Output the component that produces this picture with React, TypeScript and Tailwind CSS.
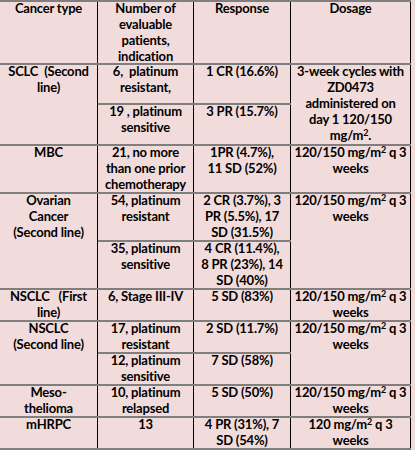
import React from "react";

const F = { fontFamily: "Lato, 'Open Sans', sans-serif" };

function Sup() {
  return <sup className="text-[9px] top-[-0.45em]">2</sup>;
}

const dose = (
  <>
    120/150 mg/m<Sup /> q 3<br />weeks
  </>
);

function Cell({ children, w, className = "" }: { children: React.ReactNode; w: string; className?: string }) {
  return (
    <div className={`${w} shrink-0 border-r border-black text-center ${className}`}>
      <div className="-mt-[2px]">{children}</div>
    </div>
  );
}

type Sub = { h: string; n: React.ReactNode; r: React.ReactNode; sep?: boolean };

function Group({ h, type, subs, d }: { h: string; type: React.ReactNode; subs: Sub[]; d: React.ReactNode }) {
  return (
    <div className={`flex ${h} border-b-2 border-[#7f7f7f]`}>
      <Cell w="w-[98px]">{type}</Cell>
      <div className="flex w-[193px] shrink-0 flex-col">
        {subs.map((s, i) => (
          <div key={i} className={`flex ${s.h} ${s.sep ? "border-b-2 border-[#7f7f7f]" : ""}`}>
            <Cell w="w-[96px]">{s.n}</Cell>
            <Cell w="w-[97px]">{s.r}</Cell>
          </div>
        ))}
      </div>
      <Cell w="w-[120px]">{d}</Cell>
    </div>
  );
}

export default function App() {
  return (
    <div
      className="w-[415px] h-[450px] overflow-hidden bg-[#f2dcdb] text-black font-bold text-[13px] leading-[16px] tracking-[-0.2px]"
      style={F}
    >
      <div className="w-[411px] border-t-2 border-[#7f7f7f]">
        <div className="flex h-[63px] border-b-2 border-[#7f7f7f]">
          <Cell w="w-[98px]">Cancer type</Cell>
          <Cell w="w-[96px]">Number of<br />evaluable<br />patients,<br />indication</Cell>
          <Cell w="w-[97px]">Response</Cell>
          <Cell w="w-[120px]">Dosage</Cell>
        </div>
        <Group
          h="h-[81px]"
          type={<>SCLC&nbsp; (Second<br />line)</>}
          subs={[
            { h: "h-[40px]", sep: true, n: <>6,&nbsp; platinum<br />resistant,</>, r: <>1 CR (16.6%)</> },
            { h: "h-[39px]", n: <>19 , platinum<br />sensitive</>, r: <>3 PR (15.7%)</> },
          ]}
          d={<>3-week cycles with<br />ZD0473<br />administered on<br />day 1 120/150<br />mg/m<Sup />.</>}
        />
        <Group
          h="h-[48px]"
          type={<>MBC</>}
          subs={[{ h: "h-[46px]", n: <>21, no more<br />than one prior<br />chemotherapy</>, r: <>1PR (4.7%),<br />11 SD (52%)</> }]}
          d={dose}
        />
        <Group
          h="h-[96px]"
          type={<>Ovarian<br />Cancer<br />(Second line)</>}
          subs={[
            { h: "h-[48px]", sep: true, n: <>54, platinum<br />resistant</>, r: <>2 CR (3.7%), 3<br />PR (5.5%), 17<br />SD (31.5%)</> },
            { h: "h-[46px]", n: <>35, platinum<br />sensitive</>, r: <>4 CR (11.4%),<br />8 PR (23%), 14<br />SD (40%)</> },
          ]}
          d={dose}
        />
        <Group
          h="h-[32px]"
          type={<>NSCLC&nbsp;&nbsp; (First<br />line)</>}
          subs={[{ h: "h-[30px]", n: <>6, Stage III-IV</>, r: <>5 SD (83%)</> }]}
          d={dose}
        />
        <Group
          h="h-[64px]"
          type={<>NSCLC<br />(Second line)</>}
          subs={[
            { h: "h-[32px]", sep: true, n: <>17, platinum<br />resistant</>, r: <>2 SD (11.7%)</> },
            { h: "h-[30px]", n: <>12, platinum<br />sensitive</>, r: <>7 SD (58%)</> },
          ]}
          d={dose}
        />
        <Group
          h="h-[32px]"
          type={<>Meso-<br />thelioma</>}
          subs={[{ h: "h-[30px]", n: <>10, platinum<br />relapsed</>, r: <>5 SD (50%)</> }]}
          d={dose}
        />
        <Group
          h="h-[32px]"
          type={<>mHRPC</>}
          subs={[{ h: "h-[30px]", n: <>13</>, r: <>4 PR (31%), 7<br />SD (54%)</> }]}
          d={<>120 mg/m<Sup /> q 3<br />weeks</>}
        />
      </div>
    </div>
  );
}
